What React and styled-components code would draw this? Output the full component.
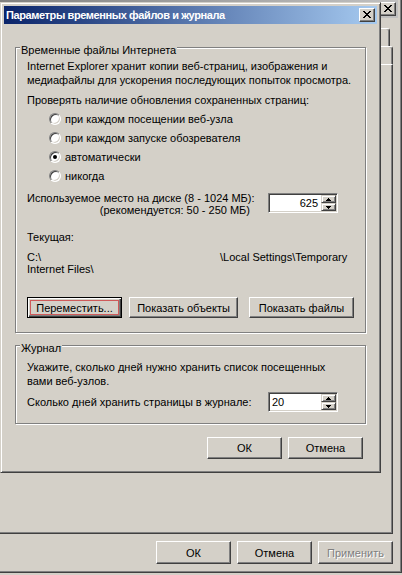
import React from 'react';
import styled, { createGlobalStyle, css } from 'styled-components';

const FACE = '#d4d0c8';

const GlobalStyle = createGlobalStyle`
  html, body {
    margin: 0;
    padding: 0;
    background: ${FACE};
  }
  body {
    font-family: "Liberation Sans", "DejaVu Sans", sans-serif;
    font-size: 11px;
    color: #000;
  }
`;

const Screen = styled.div`
  position: relative;
  width: 402px;
  height: 575px;
  overflow: hidden;
  background: ${FACE};
`;

const Window = styled.div`
  position: absolute;
  left: ${(p) => p.$left}px;
  top: ${(p) => p.$top}px;
  width: ${(p) => p.$width}px;
  height: ${(p) => p.$height}px;
  box-sizing: border-box;
  display: flex;
  flex-direction: column;
  padding: 3px;
  background: ${FACE};
  border: 1px solid;
  border-color: ${FACE} #404040 #404040 ${FACE};
  box-shadow: inset 1px 1px #fff, inset -1px -1px #808080;
`;

const TitleBar = styled.div`
  flex: none;
  height: 18px;
  display: flex;
  align-items: center;
  padding: 0 2px;
  background: ${(p) =>
    p.$active
      ? 'linear-gradient(to right, #0a246a, #a6caf0)'
      : 'linear-gradient(to right, #808080, #c0c0c0)'};
  color: #fff;
  font-weight: bold;
  letter-spacing: -0.4px;
  white-space: nowrap;
`;

const TitleText = styled.span`
  flex: 1;
  overflow: hidden;
`;

const CaptionButton = styled.span`
  flex: none;
  box-sizing: border-box;
  width: 16px;
  height: 14px;
  margin-left: auto;
  display: flex;
  align-items: center;
  justify-content: center;
  padding: 0 1px 1px 0;
  background: ${FACE};
  border: 1px solid;
  border-color: #fff #404040 #404040 #fff;
  box-shadow: inset -1px -1px #808080;
`;

const CloseGlyph = () => (
  <svg width="8" height="7" viewBox="0 0 8 7" shapeRendering="crispEdges">
    <path
      fill="#000"
      d="M0 0h2v1H0zM6 0h2v1H6zM1 1h2v1H1zM5 1h2v1H5zM2 2h4v1H2zM3 3h2v1H3zM2 4h4v1H2zM1 5h2v1H1zM5 5h2v1H5zM0 6h2v1H0zM6 6h2v1H6z"
    />
  </svg>
);

/* ---------- back window: only its right edge and button row show ---------- */

const BackClient = styled.div`
  flex: 1;
  display: flex;
  flex-direction: column;
`;

const TabRow = styled.div`
  flex: none;
  display: flex;
  justify-content: flex-end;
  height: 18px;
  margin: ${(p) => p.$top}px ${(p) => p.$right}px 0 0;
`;

const Tab = styled.div`
  flex: none;
  box-sizing: border-box;
  width: ${(p) => p.$w}px;
  height: 18px;
  border: 1px solid;
  border-bottom: none;
  border-color: #fff #404040 transparent #fff;
  border-radius: 2px 3px 0 0;
  box-shadow: inset -1px 0 #808080;
`;

const TabPanel = styled.div`
  flex: 1;
  margin-right: 5px;
  border: 1px solid;
  border-color: #fff #404040 #404040 #fff;
  box-shadow: inset -1px -1px #808080;
`;

const ButtonRow = styled.div`
  flex: none;
  display: flex;
  justify-content: flex-end;
  gap: 6px;
  margin: ${(p) => p.$top}px ${(p) => p.$right}px ${(p) => p.$bottom || 0}px 0;
`;

const focusedButton = css`
  border-color: #000;
  box-shadow: inset 1px 1px #fff, inset -1px -1px #404040, inset -2px -2px #808080;
  outline: 1px solid #cf5a5a;
  outline-offset: -4px;
`;

const Button = styled.button`
  flex: none;
  box-sizing: border-box;
  width: ${(p) => p.$w || 75}px;
  height: ${(p) => p.$h || 22}px;
  margin-left: ${(p) => p.$gap || 0}px;
  padding: 0;
  font: inherit;
  color: #000;
  background: ${FACE};
  border: 1px solid;
  border-color: #fff #404040 #404040 #fff;
  box-shadow: inset -1px -1px #808080;
  ${(p) => p.$focused && focusedButton}
  &:disabled {
    color: #808080;
    text-shadow: 1px 1px #fff;
  }
`;

/* ---------- front dialog ---------- */

const GroupBox = styled.div`
  position: relative;
  margin: ${(p) => p.$top}px 11px 0;
  padding: ${(p) => p.$pad};
  border: 1px solid #808080;
  box-shadow: inset 1px 1px #fff, 1px 1px #fff;
`;

const GroupCaption = styled.span`
  position: absolute;
  top: -4px;
  left: 4px;
  padding: 0 1px;
  line-height: 13px;
  background: ${FACE};
  white-space: nowrap;
`;

const Text = styled.div`
  line-height: ${(p) => p.$lh || 13}px;
  margin-top: ${(p) => p.$top || 0}px;
  white-space: nowrap;
`;

const RadioList = styled.div`
  margin-top: 2px;
  padding-left: 22px;
`;

const RadioRow = styled.label`
  display: flex;
  align-items: center;
  gap: 4px;
  height: 19px;
  white-space: nowrap;
`;

const RadioCircle = styled.span`
  position: relative;
  flex: none;
  box-sizing: border-box;
  width: 12px;
  height: 12px;
  border-radius: 50%;
  background: #fff;
  border: 1px solid;
  border-color: #808080 #fff #fff #808080;
  box-shadow: inset 1px 1px #404040, inset -1px -1px ${FACE};
  &::after {
    content: '';
    display: ${(p) => (p.$checked ? 'block' : 'none')};
    position: absolute;
    left: 3px;
    top: 3px;
    width: 4px;
    height: 4px;
    border-radius: 50%;
    background: #000;
  }
`;

const SpinRow = styled.div`
  display: flex;
  align-items: ${(p) => (p.$center ? 'center' : 'flex-start')};
  margin-top: ${(p) => p.$top}px;
`;

const SpinLabel = styled.div`
  flex: none;
  box-sizing: border-box;
  width: 241px;
  padding-right: ${(p) => (p.$right ? 18 : 0)}px;
  text-align: ${(p) => (p.$right ? 'right' : 'left')};
  line-height: ${(p) => (p.$right ? 12 : 13)}px;
  white-space: nowrap;
`;

const SpinBox = styled.div`
  flex: none;
  box-sizing: border-box;
  display: flex;
  width: 70px;
  height: 20px;
  margin-top: ${(p) => p.$top || 0}px;
  padding: 1px;
  background: #fff;
  border: 1px solid;
  border-color: #808080 #fff #fff #808080;
  box-shadow: inset 1px 1px #404040, inset -1px -1px ${FACE};
`;

const SpinValue = styled.div`
  flex: 1;
  padding: 0 3px 0 2px;
  line-height: 16px;
  text-align: ${(p) => p.$align};
`;

const SpinButtons = styled.div`
  flex: none;
  display: flex;
  flex-direction: column;
  width: 15px;
`;

const SpinButton = styled.div`
  box-sizing: border-box;
  height: 8px;
  display: flex;
  align-items: center;
  justify-content: center;
  background: ${FACE};
  border: 1px solid;
  border-color: ${FACE} #404040 #404040 ${FACE};
  box-shadow: inset 1px 1px #fff, inset -1px -1px #808080;
`;

const Arrow = ({ down }) => (
  <svg width="5" height="3" viewBox="0 0 5 3" shapeRendering="crispEdges">
    <path fill="#000" d={down ? 'M0 0h5v1H0zM1 1h3v1H1zM2 2h1v1H2z' : 'M2 0h1v1H2zM1 1h3v1H1zM0 2h5v1H0z'} />
  </svg>
);

const Spin = ({ value, align, top }) => (
  <SpinBox $top={top}>
    <SpinValue $align={align}>{value}</SpinValue>
    <SpinButtons>
      <SpinButton>
        <Arrow />
      </SpinButton>
      <SpinButton>
        <Arrow down />
      </SpinButton>
    </SpinButtons>
  </SpinBox>
);

const PathLine = styled.div`
  display: grid;
  grid-template-columns: 193px auto;
  line-height: 12px;
  white-space: nowrap;
`;

const GroupButtons = styled.div`
  display: flex;
  margin-top: 22px;
`;

const radios = [
  { label: 'при каждом посещении веб-узла' },
  { label: 'при каждом запуске обозревателя' },
  { label: 'автоматически', checked: true },
  { label: 'никогда' },
];

export default function App() {
  return (
    <Screen>
      <GlobalStyle />

      <Window $left={-10} $top={-4} $width={412} $height={577}>
        <TitleBar>
          <CaptionButton>
            <CloseGlyph />
          </CaptionButton>
        </TitleBar>
        <BackClient>
          <TabRow $top={10} $right={8}>
            <Tab $w={70} />
            <Tab $w={96} />
            <Tab $w={130} />
          </TabRow>
          <TabRow $top={0} $right={5}>
            <Tab $w={80} />
            <Tab $w={86} />
            <Tab $w={74} />
            <Tab $w={100} />
          </TabRow>
          <TabPanel />
          <ButtonRow $top={7} $right={5} $bottom={5}>
            <Button $h={23}>ОК</Button>
            <Button $h={23}>Отмена</Button>
            <Button $h={23} disabled>
              Применить
            </Button>
          </ButtonRow>
        </BackClient>
      </Window>

      <Window $left={0} $top={2} $width={381} $height={471}>
        <TitleBar $active>
          <TitleText>Параметры временных файлов и журнала</TitleText>
          <CaptionButton>
            <CloseGlyph />
          </CaptionButton>
        </TitleBar>

        <GroupBox $top={23} $pad="11px 11px 14px">
          <GroupCaption>Временные файлы Интернета</GroupCaption>
          <Text $lh={14}>
            Internet Explorer хранит копии веб-страниц, изображения и
            <br />
            медиафайлы для ускорения последующих попыток просмотра.
          </Text>
          <Text $top={7}>Проверять наличие обновления сохраненных страниц:</Text>
          <RadioList>
            {radios.map((r) => (
              <RadioRow key={r.label}>
                <RadioCircle $checked={r.checked} />
                {r.label}
              </RadioRow>
            ))}
          </RadioList>
          <SpinRow $top={7}>
            <SpinLabel $right>
              Используемое место на диске (8 - 1024 МБ):
              <br />
              (рекомендуется: 50 - 250 МБ)
            </SpinLabel>
            <Spin value="625" align="right" top={1} />
          </SpinRow>
          <Text $top={15}>Текущая:</Text>
          <Text $top={7} $lh={12}>
            <PathLine>
              <span>C:\</span>
              <span>\Local Settings\Temporary</span>
            </PathLine>
            Internet Files\
          </Text>
          <GroupButtons>
            <Button $w={95} $h={21} $focused>
              Переместить...
            </Button>
            <Button $w={109} $h={21} $gap={7}>
              Показать объекты
            </Button>
            <Button $w={105} $h={21} $gap={11}>
              Показать файлы
            </Button>
          </GroupButtons>
        </GroupBox>

        <GroupBox $top={12} $pad="14px 11px 11px">
          <GroupCaption>Журнал</GroupCaption>
          <Text $lh={14}>
            Укажите, сколько дней нужно хранить список посещенных
            <br />
            вами веб-узлов.
          </Text>
          <SpinRow $top={4} $center>
            <SpinLabel>Сколько дней хранить страницы в журнале:</SpinLabel>
            <Spin value="20" align="left" />
          </SpinRow>
        </GroupBox>

        <ButtonRow $top={13} $right={14}>
          <Button>ОК</Button>
          <Button>Отмена</Button>
        </ButtonRow>
      </Window>
    </Screen>
  );
}
